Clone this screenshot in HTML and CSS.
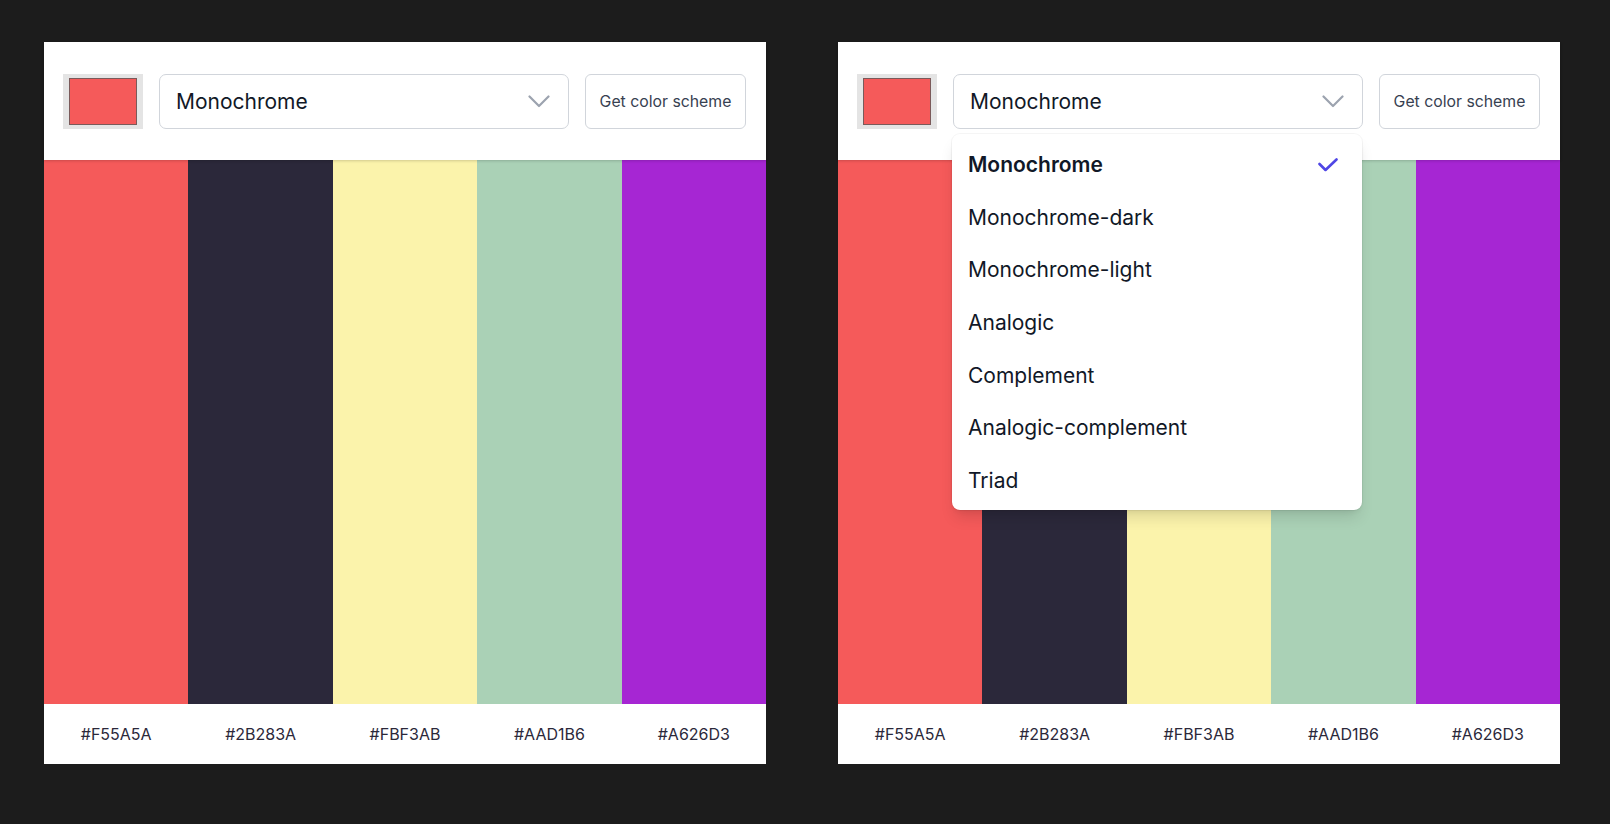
FILE: index.html
```html
<!DOCTYPE html>
<html lang="en">
<head>
<meta charset="utf-8">
<title>Color Scheme Generator</title>
<link rel="stylesheet" href="styles.css">
</head>
<body>
<div class="page">
  <div class="card">
    <div class="header">
      <div class="swatch"><div class="swatch-inner"></div></div>
      <div class="select-wrap">
        <div class="select">
          <span class="select-text">Monochrome</span>
          <svg class="chevron" width="22" height="13" viewBox="0 0 22 13"><polyline points="1.5,1.5 11,11 20.5,1.5" fill="none" stroke="#9ca3af" stroke-width="2.2" stroke-linecap="round" stroke-linejoin="round"/></svg>
        </div>
      </div>
      <button class="btn">Get color scheme</button>
    </div>
    <div class="stripes">
      <div class="stripe c1"></div>
      <div class="stripe c2"></div>
      <div class="stripe c3"></div>
      <div class="stripe c4"></div>
      <div class="stripe c5"></div>
    </div>
    <div class="footer">
      <span class="hex">#F55A5A</span>
      <span class="hex">#2B283A</span>
      <span class="hex">#FBF3AB</span>
      <span class="hex">#AAD1B6</span>
      <span class="hex">#A626D3</span>
    </div>
  </div>

  <div class="card">
    <div class="header">
      <div class="swatch"><div class="swatch-inner"></div></div>
      <div class="select-wrap">
        <div class="select">
          <span class="select-text">Monochrome</span>
          <svg class="chevron" width="22" height="13" viewBox="0 0 22 13"><polyline points="1.5,1.5 11,11 20.5,1.5" fill="none" stroke="#9ca3af" stroke-width="2.2" stroke-linecap="round" stroke-linejoin="round"/></svg>
        </div>
        <ul class="menu">
          <li class="item selected">Monochrome
            <svg class="check" width="20" height="15" viewBox="0 0 20 15"><polyline points="1.5,6 7.5,12 18.5,1.5" fill="none" stroke="#4f46e5" stroke-width="2.6" stroke-linecap="round" stroke-linejoin="round"/></svg>
          </li>
          <li class="item">Monochrome-dark</li>
          <li class="item">Monochrome-light</li>
          <li class="item">Analogic</li>
          <li class="item">Complement</li>
          <li class="item">Analogic-complement</li>
          <li class="item">Triad</li>
        </ul>
      </div>
      <button class="btn">Get color scheme</button>
    </div>
    <div class="stripes">
      <div class="stripe c1"></div>
      <div class="stripe c2"></div>
      <div class="stripe c3"></div>
      <div class="stripe c4"></div>
      <div class="stripe c5"></div>
    </div>
    <div class="footer">
      <span class="hex">#F55A5A</span>
      <span class="hex">#2B283A</span>
      <span class="hex">#FBF3AB</span>
      <span class="hex">#AAD1B6</span>
      <span class="hex">#A626D3</span>
    </div>
  </div>
</div>
</body>
</html>
```

FILE: styles.css
```css
* { box-sizing: border-box; }

html, body {
  margin: 0;
  padding: 0;
  background: #1c1c1c;
  font-family: Inter, "Noto Sans", sans-serif;
}

.page {
  display: flex;
  gap: 72px;
  padding: 42px 0 0 44px;
}

.card {
  width: 722px;
  height: 722px;
  background: #ffffff;
  display: flex;
  flex-direction: column;
}

.header {
  position: relative;
  z-index: 2;
  height: 118px;
  flex: none;
  display: flex;
  align-items: center;
  gap: 16px;
  padding: 0 20px 0 19px;
  background: #ffffff;
  box-shadow: 0 1px 3px rgba(0, 0, 0, 0.12), 0 1px 2px rgba(0, 0, 0, 0.06);
}

.swatch {
  width: 80px;
  height: 55px;
  flex: none;
  background: #e4e4e4;
  padding: 4px 6px;
}

.swatch-inner {
  width: 100%;
  height: 100%;
  background: #F55A5A;
  border: 1px solid #7a5a5a;
}

.select-wrap {
  position: relative;
  flex: 1;
}

.select {
  height: 55px;
  border: 1px solid #d1d5db;
  border-radius: 7px;
  background: #fff;
  display: flex;
  align-items: center;
  justify-content: space-between;
  padding: 0 18px 0 16px;
}

.select-text {
  font-size: 21px;
  color: #111827;
}

.chevron { display: block; }

.btn {
  flex: none;
  width: 161px;
  height: 55px;
  border: 1px solid #d1d5db;
  border-radius: 6px;
  background: #fff;
  font-family: Inter, "Noto Sans", sans-serif;
  font-size: 15.8px;
  color: #374151;
  padding: 0;
}

.stripes {
  flex: 1;
  display: flex;
}

.stripe { flex: 1; }
.c1 { background: #F55A5A; }
.c2 { background: #2B283A; }
.c3 { background: #FBF3AB; }
.c4 { background: #AAD1B6; }
.c5 { background: #A626D3; }

.footer {
  height: 60px;
  flex: none;
  display: flex;
  align-items: center;
}

.hex {
  flex: 1;
  text-align: center;
  font-size: 16px;
  color: #2B283A;
}

.menu {
  position: absolute;
  top: 60px;
  left: -1px;
  width: 410px;
  margin: 0;
  list-style: none;
  padding: 5px 0 3px;
  background: #fff;
  border-radius: 8px;
  box-shadow: 0 10px 15px -3px rgba(0, 0, 0, 0.12), 0 4px 6px -4px rgba(0, 0, 0, 0.1), 0 0 0 1px rgba(0, 0, 0, 0.04);
}

.item {
  position: relative;
  height: 52.6px;
  display: flex;
  align-items: center;
  padding-left: 16px;
  font-size: 21px;
  color: #111827;
}

.item.selected {
  font-weight: 600;
  color: #111827;
}

.check {
  position: absolute;
  right: 24px;
  top: 50%;
  margin-top: -7px;
}
```
